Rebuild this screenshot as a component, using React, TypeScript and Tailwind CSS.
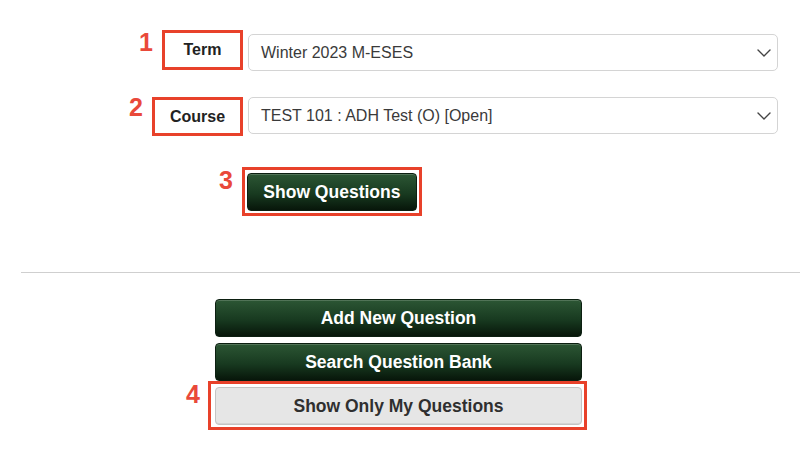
import React from "react";

const Chevron = () => (
  <svg width="14" height="8" viewBox="0 0 14 8" className="shrink-0">
    <polyline points="1,1 7,7 13,1" fill="none" stroke="#444" strokeWidth="1.4" strokeLinecap="round" strokeLinejoin="round" />
  </svg>
);

const Num = ({ n }: { n: string }) => (
  <span className="text-[25px] leading-none font-bold text-[#e9493a] mr-[9px]">{n}</span>
);

const Select = ({ value, mt }: { value: string; mt: string }) => (
  <div className={`ml-[5px] w-[530px] h-[37px] rounded-[5px] border border-[#d4d4d4] bg-white flex items-center justify-between pl-[12px] pr-[6px] ${mt}`}>
    <span className="text-[16px] text-[#3a3a3a]">{value}</span>
    <Chevron />
  </div>
);

const greenBtn =
  "h-[38px] rounded-[4px] border border-[#0c1f11] bg-[linear-gradient(#2c5634,#183a20_55%,#07160a)] shadow-[inset_0_1px_0_rgba(255,255,255,0.18)] text-white font-bold text-[17.5px] flex items-center justify-center";

export default function App() {
  return (
    <div className="w-[800px] h-[450px] bg-white overflow-hidden" style={{ fontFamily: '"Liberation Sans", Arial, sans-serif' }}>
      <div className="pt-[30px]">
        <div className="flex items-start">
          <div className="w-[243px] flex justify-end items-start">
            <Num n="1" />
            <div className="w-[81px] h-[40px] border-[3px] border-[#e8412a] flex items-center justify-center text-[16px] font-bold text-[#222]">
              Term
            </div>
          </div>
          <Select value="Winter 2023 M-ESES" mt="mt-[4px]" />
        </div>
        <div className="flex items-start mt-[26px]">
          <div className="w-[243px] flex justify-end items-start">
            <span className="mt-[-2px] flex"><Num n="2" /></span>
            <div className="w-[91px] h-[39px] border-[3px] border-[#e8412a] flex items-center justify-center text-[16px] font-bold text-[#222]">
              Course
            </div>
          </div>
          <Select value="TEST 101 : ADH Test (O) [Open]" mt="mt-0" />
        </div>
        <div className="flex items-start mt-[31px] pl-[219px]">
          <span className="mt-[1px] flex"><Num n="3" /></span>
          <div className="w-[180px] h-[49px] border-[3px] border-[#e8412a] pt-[3px] px-[2px]">
            <div className={`${greenBtn} w-[170px]`}>Show Questions</div>
          </div>
        </div>
      </div>
      <div className="ml-[21px] mt-[56px] border-t border-[#cfcfcf]" />
      <div className="pl-[215px] pt-[26px] flex flex-col gap-[6px]">
        <div className={`${greenBtn} w-[367px]`}>Add New Question</div>
        <div className={`${greenBtn} w-[367px]`}>Search Question Bank</div>
        <div className="relative w-[367px]">
          <div className="h-[38px] rounded-[4px] border border-[#c4c4c4] bg-[#e6e6e6] shadow-[inset_0_-1px_0_rgba(0,0,0,0.08)] text-[#2f2f2f] font-bold text-[17.5px] flex items-center justify-center">
            Show Only My Questions
          </div>
          <div className="absolute left-[-7px] right-[-5px] top-[-6px] bottom-[-5px] border-[3px] border-[#e8412a] pointer-events-none" />
          <span className="absolute left-[-29px] top-[-5px] text-[25px] leading-none font-bold text-[#e9493a]">4</span>
        </div>
      </div>
    </div>
  );
}
